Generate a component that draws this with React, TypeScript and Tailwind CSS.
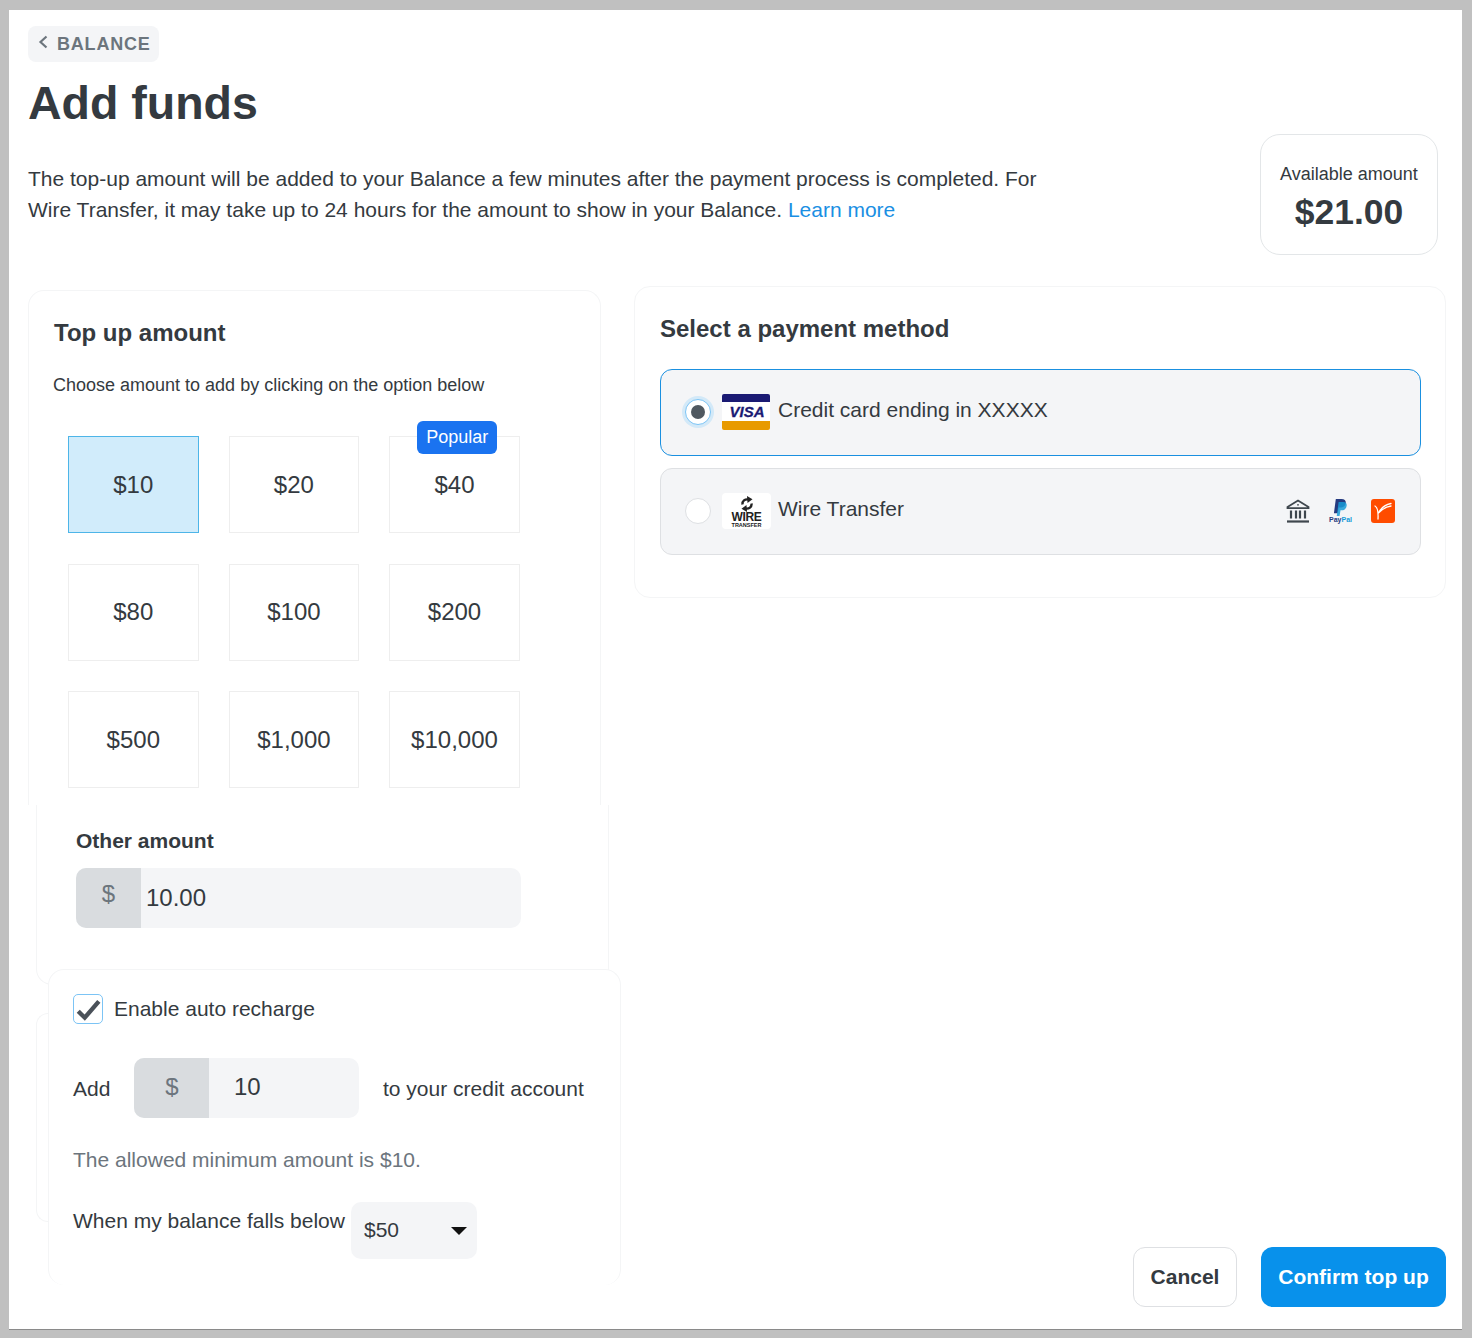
const amounts = ["$10", "$20", "$40", "$80", "$100", "$200", "$500", "$1,000", "$10,000"]

function VisaLogo() {
  return (
    <svg viewBox="0 0 48 36" className="w-12 h-9 shrink-0" aria-hidden="true">
      <rect width="48" height="36" rx="2" fill="#ffffff" />
      <path d="M2 0h44a2 2 0 0 1 2 2v6H0V2a2 2 0 0 1 2-2z" fill="#1a1a73" />
      <path d="M0 27h48v7a2 2 0 0 1-2 2H2a2 2 0 0 1-2-2z" fill="#e89a00" />
      <text x="25" y="23" textAnchor="middle" fontFamily="Liberation Sans, sans-serif" fontSize="15" fontWeight="700" fontStyle="italic" fill="#1a1a73" stroke="#1a1a73" strokeWidth="0.3">VISA</text>
    </svg>
  )
}

function WireLogo() {
  return (
    <div className="w-[49px] h-9 shrink-0 bg-white rounded-sm flex flex-col items-center text-[#222]">
      <svg viewBox="0 0 16 16" className="w-4 h-4 mt-[3px] shrink-0" aria-hidden="true">
        <path d="M3.500 8.500C3 5 6 2.800 9.500 3.500" fill="none" stroke="#222" strokeWidth="2.400" />
        <path d="M8 0l5.500 3.200L8.500 7z" fill="#222" />
        <path d="M12.500 7.500C13 11 10 13.200 6.500 12.500" fill="none" stroke="#222" strokeWidth="2.400" />
        <path d="M8 16l-5.500-3.200L7.500 9z" fill="#222" />
      </svg>
      <span className="text-[12px] leading-[10px] font-bold tracking-[-0.3px] shrink-0">WIRE</span>
      <span className="text-[5.500px] leading-[6px] font-bold shrink-0">TRANSFER</span>
    </div>
  )
}

function BankIcon() {
  return (
    <svg viewBox="0 0 24 24" className="w-6 h-6" fill="none" stroke="#3f474e" aria-hidden="true">
      <path d="M1.500 8 12 1.500 22.500 8v1.200h-21z" strokeWidth="1.800" />
      <circle cx="12" cy="5.800" r="0.900" fill="#3f474e" stroke="none" />
      <path d="M5 11.500v8M10 11.500v8M14 11.500v8M19 11.500v8" strokeWidth="2.200" />
      <path d="M1 22.500h22" strokeWidth="2.200" />
    </svg>
  )
}

function PaypalIcon() {
  return (
    <div className="w-6 h-6 flex flex-col items-center">
      <svg viewBox="0 0 16 18" className="w-[15px] h-[17px] shrink-0" aria-hidden="true">
        <path d="M3 0h6c4 0 5 2 4.500 4.500C13 8 10.500 9 8 9H6l-1 6H1z" fill="#253b80" />
        <path d="M6 3h5c3 0 4 2 3.500 4.500C14 10.500 12 12 9.500 12H8l-1 6H4z" fill="#179bd7" opacity="0.85" />
      </svg>
      <span className="text-[7px] leading-[7px] font-bold shrink-0">
        <span className="text-[#253b80]">Pay</span>
        <span className="text-[#179bd7]">Pal</span>
      </span>
    </div>
  )
}

function PayeerIcon() {
  return (
    <svg viewBox="0 0 24 24" className="w-6 h-6" aria-hidden="true">
      <rect width="24" height="24" rx="3" fill="#ff4c00" />
      <path d="M4 7c2 1 3.500 4 3 13M7.500 14C10 9 14 5.500 20 4.500M8 13.500c3-3 7-6 12-6.500" fill="none" stroke="#fff" strokeWidth="1.300" strokeLinecap="round" />
    </svg>
  )
}

export default function App() {
  return (
    <div className="h-[1338px] bg-[#c0c0c0] pt-[10px] pl-[9px] pr-[10px] pb-2 font-['Liberation_Sans',sans-serif] text-[#343a40]">
      <div className="h-[1320px] bg-white border-b border-[#8a8a8a] flex flex-col overflow-hidden">
        {/* Header */}
        <div className="flex justify-between pl-[19px] pr-[24px] pt-4 h-[245px] shrink-0">
          <div>
            <div className="inline-flex items-center w-[131px] h-9 px-[10px] bg-[#f4f5f7] rounded-lg text-[#6c757d]">
              <svg viewBox="0 0 10 14" className="w-[10px] h-[14px] -mt-1 shrink-0" fill="none" stroke="currentColor" strokeWidth="2.200" aria-hidden="true">
                <path d="M8.500 1.500 2.500 7l6 5.500" />
              </svg>
              <span className="ml-[9px] text-lg font-bold tracking-[0.8px]">BALANCE</span>
            </div>
            <h1 className="mt-[12px] text-[46.500px] leading-[58px] font-bold">Add funds</h1>
            <p className="mt-[31px] w-[1020px] text-[21px] leading-[31px]">
              The top-up amount will be added to your Balance a few minutes after the payment process is completed. For Wire Transfer, it may take up to 24 hours for the amount to show in your Balance.{" "}
              <a href="#" className="text-[#1a8fe3]">Learn more</a>
            </p>
          </div>
          <div className="mt-[108px] w-[178px] h-[121px] border border-[#e3e6e8] rounded-[20px] flex flex-col items-center pt-[27px]">
            <span className="text-lg leading-6">Available amount</span>
            <span className="mt-1 text-[35.500px] leading-[44px] font-bold">$21.00</span>
          </div>
        </div>

        <div className="flex flex-1 min-h-0">
          {/* Left column */}
          <div className="w-[625px] shrink-0 pt-[35px]">
            <div className="ml-[19px] w-[573px] h-[515px] border border-b-0 border-[#f4f5f6] rounded-t-2xl pt-[28px]">
              <h2 className="ml-[25px] text-2xl leading-7 font-bold">Top up amount</h2>
              <p className="ml-[24px] mt-[26px] text-lg leading-6">Choose amount to add by clicking on the option below</p>
              <div className="ml-[39px] mt-[39px] grid grid-cols-[130.600px_130.600px_130.600px] gap-x-[30px] gap-y-[30.500px]">
                {amounts.map((amount, i) => (
                  <div
                    key={amount}
                    className={
                      i === 0
                        ? "relative h-[97px] flex items-center justify-center text-2xl bg-[#d1ecfb] border border-[#4db5e8]"
                        : "relative h-[97px] flex items-center justify-center text-2xl bg-white border border-[#eeeeee]"
                    }
                  >
                    {amount}
                    {i === 2 && (
                      <span className="absolute -top-4 left-[27px] h-[33px] w-[80px] pb-[2px] flex items-center justify-center rounded-md bg-[#1a73f0] text-white text-lg">
                        Popular
                      </span>
                    )}
                  </div>
                ))}
              </div>
            </div>

            <div className="ml-[27px] w-[573px] h-[180px] border border-t-0 border-[#f4f5f6] rounded-b-2xl pt-[24px] pl-[39px]">
              <div className="text-[21px] leading-6 font-bold">Other amount</div>
              <div className="mt-[15px] w-[445px] h-[60px] flex rounded-[10px] overflow-hidden bg-[#f4f5f7]">
                <div className="w-[65px] bg-[#d9dcdf] text-[#6c757d] text-2xl flex justify-center pt-[10px]">$</div>
                <input defaultValue="10.00" className="flex-1 pl-[5px] bg-transparent text-2xl outline-none" />
              </div>
            </div>

            <div className="relative ml-[39px] -mt-4 w-[573px] h-[316px] bg-white border border-b-0 border-[#f4f5f6] rounded-2xl pl-6 pt-[23px]">
              {/* leftover card edge that shows beside this panel */}
              <div className="absolute -left-[13px] top-[43px] w-[12px] h-[209px] border border-r-0 border-[#f4f5f6] rounded-l-2xl" />
              <div className="flex items-center">
                <div className="w-[30px] h-[30px] rounded-[5px] border border-[#7cc4f5] flex items-center justify-center">
                  <svg viewBox="0 0 24 24" className="w-[26px] h-[26px]" fill="none" stroke="#4a5159" strokeWidth="4" aria-hidden="true">
                    <path d="M3 14l6 6L22 5" />
                  </svg>
                </div>
                <span className="ml-[11px] text-[21px]">Enable auto recharge</span>
              </div>
              <div className="mt-[33px] flex items-center text-[21px]">
                <span className="w-[61px] mt-[2px]">Add</span>
                <div className="w-[225px] h-[60px] flex rounded-[10px] overflow-hidden bg-[#f4f5f7]">
                  <div className="w-[75px] pb-[2px] pl-[1px] bg-[#d9dcdf] text-[#6c757d] text-2xl flex items-center justify-center">$</div>
                  <input defaultValue="10" className="w-[150px] pl-[25px] pb-[1px] bg-transparent text-2xl outline-none" />
                </div>
                <span className="ml-6 mt-[2px]">to your credit account</span>
              </div>
              <p className="mt-[30px] text-[21px] leading-6 text-[#6c757d]">The allowed minimum amount is $10.</p>
              <div className="mt-[30px] flex items-start text-[21px]">
                <span className="mt-[3px]">When my balance falls below</span>
                <div className="relative ml-[6px] w-[126px] h-[57px] rounded-[10px] bg-[#f4f5f7]">
                  <select className="w-full h-full appearance-none bg-transparent pl-[13px] text-[21px] outline-none">
                    <option>$50</option>
                  </select>
                  <svg viewBox="0 0 16 8" className="absolute right-[10px] top-[25px] w-4 h-2" aria-hidden="true">
                    <path d="M0 0h16L8 8z" fill="#111" />
                  </svg>
                </div>
              </div>
            </div>
          </div>

          {/* Right column */}
          <div className="flex-1 min-w-0 pr-4 pt-[31px] flex flex-col justify-between pb-[22px]">
            <div className="h-[312px] border border-[#f4f5f6] rounded-2xl pl-[25px] pr-[24px] pt-[28px]">
              <h2 className="text-2xl leading-7 font-bold">Select a payment method</h2>
              <div className="mt-[26px] h-[87px] rounded-xl bg-[#f4f5f7] border border-[#1a90e0] flex items-start pl-6 pt-6">
                <div className="w-[26px] h-[26px] mt-[5px] rounded-full bg-white border border-[#7cc4f5] ring-[3px] ring-[#d3e9f8] flex items-center justify-center shrink-0">
                  <div className="w-[14px] h-[14px] rounded-full bg-[#4f5860]" />
                </div>
                <div className="ml-[11px]"><VisaLogo /></div>
                <span className="ml-2 mt-[2px] text-[21px] leading-7">Credit card ending in XXXXX</span>
              </div>
              <div className="mt-3 h-[87px] rounded-xl bg-[#f4f5f7] border border-[#dee0e3] flex items-start pl-6 pt-6">
                <div className="w-[26px] h-[26px] mt-[5px] rounded-full bg-white border border-[#dee0e3] shrink-0" />
                <div className="ml-[11px]"><WireLogo /></div>
                <span className="ml-[7px] mt-[2px] text-[21px] leading-7">Wire Transfer</span>
                <div className="ml-auto mr-[25px] mt-[6px] flex gap-[18.500px]">
                  <BankIcon />
                  <PaypalIcon />
                  <PayeerIcon />
                </div>
              </div>
            </div>
            <div className="flex justify-end gap-6">
              <button className="w-[104px] h-[60px] rounded-xl bg-white border border-[#dee0e3] text-[21px] font-bold">Cancel</button>
              <button className="w-[185px] h-[60px] rounded-xl bg-[#0891eb] text-white text-[21px] font-bold">Confirm top up</button>
            </div>
          </div>
        </div>
      </div>
    </div>
  )
}
